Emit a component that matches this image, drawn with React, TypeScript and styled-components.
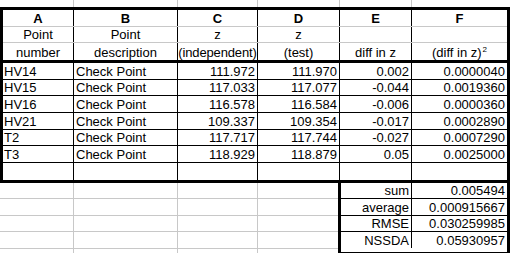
import React from 'react';
import styled, {createGlobalStyle} from 'styled-components';

const GlobalStyle = createGlobalStyle`
  html, body {
    margin: 0;
    padding: 0;
    background: #ffffff;
  }
  body {
    font-family: "Liberation Sans", Arial, sans-serif;
    font-size: 13px;
    color: #000000;
  }
`;

const GRID = '#c8c8c8';
const ROW = 16.667;

// column widths (each includes its 1px right line)
const TABLE_COLS = [71, 104, 80, 82, 72, 95];
const TOP_COLS = [74, 104, 80, 82, 72, 98];
const LOWER_COLS = [74, 104, 80, 80];
const SUMMARY_COLS = [71, 95];

const Sheet = styled.div`
  width: 510px;
  height: 253px;
  overflow: hidden;
  display: flex;
  flex-direction: column;
`;

const Row = styled.div<{ $h: number; $line?: string; $lineW?: number }>`
  display: flex;
  box-sizing: border-box;
  height: ${p => p.$h}px;
  flex: none;
  border-bottom: ${p => (p.$line ? `${p.$lineW ?? 1}px solid ${p.$line}` : 'none')};
`;

const Cell = styled.div<{ $w: number; $align?: 'left' | 'right' | 'center'; $edge?: string; $bold?: boolean; $tight?: boolean }>`
  box-sizing: border-box;
  width: ${p => p.$w}px;
  flex: none;
  display: flex;
  align-items: flex-end;
  justify-content: ${p => (p.$align === 'right' ? 'flex-end' : p.$align === 'center' ? 'center' : 'flex-start')};
  padding: ${p => (p.$align === 'right' ? '0 2px 0 0' : p.$align === 'center' ? '0' : '0 0 0 2px')};
  border-right: ${p => (p.$edge ? `1px solid ${p.$edge}` : 'none')};
  line-height: 15px;
  white-space: nowrap;
  font-weight: ${p => (p.$bold ? 700 : 400)};
  letter-spacing: ${p => (p.$tight ? '-0.15px' : 'normal')};
`;

const FirstCell = styled(Cell)`
  padding-left: 1px;
`;

const Text = styled.span`
  display: block;
`;

const Table = styled.div`
  box-sizing: border-box;
  width: 510px;
  border: 3px solid #000000;
  flex: none;
`;

const Lower = styled.div`
  display: flex;
  flex: none;
`;

const LowerGrid = styled.div`
  width: 338px;
  display: flex;
  flex-direction: column;
`;

const Summary = styled.div`
  box-sizing: border-box;
  width: 172px;
  border: 3px solid #000000;
  border-top: none;
`;

const Sup = styled.sup`
  font-size: 8px;
  line-height: 0;
  vertical-align: 5px;
  margin-left: 1px;
`;

const data = [
  ['HV14', 'Check Point', '111.972', '111.970', '0.002', '0.0000040'],
  ['HV15', 'Check Point', '117.033', '117.077', '-0.044', '0.0019360'],
  ['HV16', 'Check Point', '116.578', '116.584', '-0.006', '0.0000360'],
  ['HV21', 'Check Point', '109.337', '109.354', '-0.017', '0.0002890'],
  ['T2', 'Check Point', '117.717', '117.744', '-0.027', '0.0007290'],
  ['T3', 'Check Point', '118.929', '118.879', '0.05', '0.0025000'],
  ['', '', '', '', '', ''],
];

const summary = [
  ['sum', '0.005494'],
  ['average', '0.000915667'],
  ['RMSE', '0.030259985'],
  ['NSSDA', '0.05930957'],
];

const header: React.ReactNode[][] = [
  ['A', 'B', 'C', 'D', 'E', 'F'],
  ['Point', 'Point', 'z', 'z', '', ''],
  ['number', 'description', '(independent)', '(test)', 'diff in z', <>(diff in z)<Sup>2</Sup></>],
];

const summaryHeights = [16, ROW, ROW, 15.667];
const lowerHeights = [16, ROW, ROW, ROW];

export default function App() {
  const last = (cols: number[], i: number) => i === cols.length - 1;

  return (
    <>
      <GlobalStyle/>
      <Sheet>
        <Row $h={7}>
          {TOP_COLS.map((w, i) => (
            <Cell key={i} $w={w} $edge={last(TOP_COLS, i) ? undefined : GRID}/>
          ))}
        </Row>

        <Table>
          {header.map((cells, r) => (
            <Row
              key={r}
              $h={r === 2 ? ROW + 3 : ROW}
              $line={r === 2 ? '#000000' : GRID}
              $lineW={r === 2 ? 3 : 1}
            >
              {cells.map((c, i) => (
                <Cell
                  key={i}
                  $w={TABLE_COLS[i]}
                  $align="center"
                  $bold={r === 0}
                  $tight={r === 2 && i === 2}
                  $edge={last(TABLE_COLS, i) ? undefined : '#000000'}
                >
                  <Text>{c}</Text>
                </Cell>
              ))}
            </Row>
          ))}

          {data.map((cells, r) => {
            const isLast = r === data.length - 1;
            return (
              <Row key={r} $h={isLast ? 17 : ROW} $line={isLast ? undefined : '#000000'}>
                {cells.map((c, i) => {
                  const edge = last(TABLE_COLS, i) ? undefined : '#000000';
                  if (i === 0) {
                    return <FirstCell key={i} $w={TABLE_COLS[i]} $edge={edge}>{c}</FirstCell>;
                  }
                  return (
                    <Cell key={i} $w={TABLE_COLS[i]} $align={i === 1 ? 'left' : 'right'} $edge={edge}>
                      {c}
                    </Cell>
                  );
                })}
              </Row>
            );
          })}
        </Table>

        <Lower>
          <LowerGrid>
            {lowerHeights.map((h, r) => (
              <Row key={r} $h={h} $line={GRID}>
                {LOWER_COLS.map((w, i) => (
                  <Cell key={i} $w={w} $edge={last(LOWER_COLS, i) ? undefined : GRID}/>
                ))}
              </Row>
            ))}
            <Row $h={6}>
              {LOWER_COLS.map((w, i) => (
                <Cell key={i} $w={w} $edge={last(LOWER_COLS, i) ? undefined : GRID}/>
              ))}
            </Row>
          </LowerGrid>

          <Summary>
            {summary.map(([label, value], r) => {
              const isLast = r === summary.length - 1;
              return (
                <Row key={r} $h={summaryHeights[r]} $line={isLast ? undefined : '#000000'}>
                  <Cell $w={SUMMARY_COLS[0]} $align="right" $edge="#000000">{label}</Cell>
                  <Cell $w={SUMMARY_COLS[1]} $align="right">{value}</Cell>
                </Row>
              );
            })}
          </Summary>
        </Lower>
      </Sheet>
    </>
  );
}
